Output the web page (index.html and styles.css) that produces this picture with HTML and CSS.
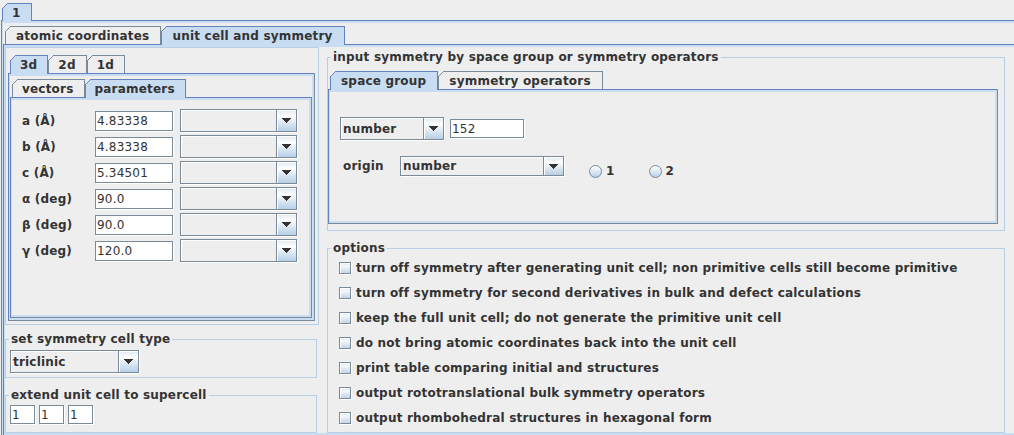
FILE: index.html
```html
<!DOCTYPE html>
<html>
<head>
<meta charset="utf-8">
<title>unit cell and symmetry</title>
<link rel="stylesheet" href="styles.css">
</head>
<body>
<div class="root">
  <div class="tabpane">
    <div class="tabrow r1"><div class="tab sel">1</div></div>
    <div class="tabcontent c1">
      <div class="tabpane">
        <div class="tabrow">
          <div class="tab">atomic coordinates</div>
          <div class="tab sel">unit cell and symmetry</div>
        </div>
        <div class="tabcontent c2">
          <div class="cols">
            <div class="leftcol">
              <div class="panel">
                <div class="tabpane">
                  <div class="tabrow compact">
                    <div class="tab sel">3d</div>
                    <div class="tab">2d</div>
                    <div class="tab">1d</div>
                  </div>
                  <div class="tabcontent c3">
                    <div class="tabpane">
                      <div class="tabrow compact">
                        <div class="tab">vectors</div>
                        <div class="tab sel">parameters</div>
                      </div>
                      <div class="tabcontent params">
                        <div class="prow"><span class="plabel">a (Å)</span><span class="tf ptf">4.83338</span><span class="combo pcombo"><span class="val"></span><span class="btn"><svg width="9" height="5" viewBox="0 0 9 5"><path d="M0 0h9v1H0zM1 1h7v1H1zM2 2h5v1H2zM3 3h3v1H3zM4 4h1v1H4z"/></svg></span></span></div>
                        <div class="prow"><span class="plabel">b (Å)</span><span class="tf ptf">4.83338</span><span class="combo pcombo"><span class="val"></span><span class="btn"><svg width="9" height="5" viewBox="0 0 9 5"><path d="M0 0h9v1H0zM1 1h7v1H1zM2 2h5v1H2zM3 3h3v1H3zM4 4h1v1H4z"/></svg></span></span></div>
                        <div class="prow"><span class="plabel">c (Å)</span><span class="tf ptf">5.34501</span><span class="combo pcombo"><span class="val"></span><span class="btn"><svg width="9" height="5" viewBox="0 0 9 5"><path d="M0 0h9v1H0zM1 1h7v1H1zM2 2h5v1H2zM3 3h3v1H3zM4 4h1v1H4z"/></svg></span></span></div>
                        <div class="prow"><span class="plabel">α (deg)</span><span class="tf ptf">90.0</span><span class="combo pcombo"><span class="val"></span><span class="btn"><svg width="9" height="5" viewBox="0 0 9 5"><path d="M0 0h9v1H0zM1 1h7v1H1zM2 2h5v1H2zM3 3h3v1H3zM4 4h1v1H4z"/></svg></span></span></div>
                        <div class="prow"><span class="plabel">β (deg)</span><span class="tf ptf">90.0</span><span class="combo pcombo"><span class="val"></span><span class="btn"><svg width="9" height="5" viewBox="0 0 9 5"><path d="M0 0h9v1H0zM1 1h7v1H1zM2 2h5v1H2zM3 3h3v1H3zM4 4h1v1H4z"/></svg></span></span></div>
                        <div class="prow"><span class="plabel">γ (deg)</span><span class="tf ptf">120.0</span><span class="combo pcombo"><span class="val"></span><span class="btn"><svg width="9" height="5" viewBox="0 0 9 5"><path d="M0 0h9v1H0zM1 1h7v1H1zM2 2h5v1H2zM3 3h3v1H3zM4 4h1v1H4z"/></svg></span></span></div>
                      </div>
                    </div>
                  </div>
                </div>
              </div>
              <fieldset class="group g-cell">
                <legend>set symmetry cell type</legend>
                <div class="gbody">
                  <span class="combo ccombo"><span class="val">triclinic</span><span class="btn"><svg width="9" height="5" viewBox="0 0 9 5"><path d="M0 0h9v1H0zM1 1h7v1H1zM2 2h5v1H2zM3 3h3v1H3zM4 4h1v1H4z"/></svg></span></span>
                </div>
              </fieldset>
              <fieldset class="group g-super">
                <legend>extend unit cell to supercell</legend>
                <div class="gbody">
                  <span class="tf stf">1</span><span class="tf stf">1</span><span class="tf stf">1</span>
                </div>
              </fieldset>
            </div>
            <div class="rightcol">
              <fieldset class="group g-input">
                <legend>input symmetry by space group or symmetry operators</legend>
                <div class="gbody">
                  <div class="tabpane">
                    <div class="tabrow">
                      <div class="tab sel">space group</div>
                      <div class="tab">symmetry operators</div>
                    </div>
                    <div class="tabcontent sg">
                      <div class="sgrow">
                        <span class="combo ncombo"><span class="val">number</span><span class="btn"><svg width="9" height="5" viewBox="0 0 9 5"><path d="M0 0h9v1H0zM1 1h7v1H1zM2 2h5v1H2zM3 3h3v1H3zM4 4h1v1H4z"/></svg></span></span>
                        <span class="tf ntf">152</span>
                      </div>
                      <div class="sgrow orow">
                        <span class="olabel">origin</span>
                        <span class="combo ocombo"><span class="val">number</span><span class="btn"><svg width="9" height="5" viewBox="0 0 9 5"><path d="M0 0h9v1H0zM1 1h7v1H1zM2 2h5v1H2zM3 3h3v1H3zM4 4h1v1H4z"/></svg></span></span>
                        <span class="radios">
                          <span class="radio"><span class="rb"></span>1</span>
                          <span class="radio"><span class="rb"></span>2</span>
                        </span>
                      </div>
                    </div>
                  </div>
                </div>
              </fieldset>
              <fieldset class="group g-opts">
                <legend>options</legend>
                <div class="gbody">
                  <div class="opt"><span class="cb"></span>turn off symmetry after generating unit cell; non primitive cells still become primitive</div>
                  <div class="opt"><span class="cb"></span>turn off symmetry for second derivatives in bulk and defect calculations</div>
                  <div class="opt"><span class="cb"></span>keep the full unit cell; do not generate the primitive unit cell</div>
                  <div class="opt"><span class="cb"></span>do not bring atomic coordinates back into the unit cell</div>
                  <div class="opt"><span class="cb"></span>print table comparing initial and structures</div>
                  <div class="opt"><span class="cb"></span>output rototranslational bulk symmetry operators</div>
                  <div class="opt"><span class="cb"></span>output rhombohedral structures in hexagonal form</div>
                </div>
              </fieldset>
            </div>
          </div>
        </div>
      </div>
    </div>
  </div>
</div>
</body>
</html>
```
FILE: styles.css
```css
html, body {
  margin: 0;
  padding: 0;
  overflow: hidden;
  background: #eeeeee;
}
body {
  width: 1014px;
  height: 435px;
  font-family: "DejaVu Sans", sans-serif;
  font-weight: bold;
  font-size: 12px;
  line-height: 14px;
  letter-spacing: 0.2px;
  color: #333333;
}
.root {
  width: 1040px;
  padding: 3px 0 0 1px;
}
.tabpane {
  display: flex;
  flex-direction: column;
}
.tabrow {
  display: flex;
  align-items: flex-start;
  height: 18px;
  padding-left: 2px;
  position: relative;
  z-index: 1;
}
.tabrow.r1 {
  height: 17px;
  padding-left: 1px;
}
.tab {
  box-sizing: border-box;
  position: relative;
  display: flex;
  align-items: center;
  height: 100%;
  padding: 0 11px 0 10px;
  border: 1px solid #7a8a99;
  border-bottom: 0;
  background: #eeeeee;
  white-space: nowrap;
}
.tab::before {
  content: "";
  position: absolute;
  left: -1px;
  top: -1px;
  width: 6px;
  height: 6px;
  background: linear-gradient(135deg, #eeeeee 3.9px, #7a8a99 3.9px, #7a8a99 4.6px, transparent 4.6px);
}
.tab.sel {
  height: calc(100% + 1px);
  padding-bottom: 1px;
  background: #c8ddf2;
  border-color: #6382bf;
}
.tab.sel::before {
  background: linear-gradient(135deg, #eeeeee 3.9px, #6382bf 3.9px, #6382bf 4.6px, transparent 4.6px);
}
.tabrow.r1 .tab {
  padding: 0 10px 0 9px;
}
.tabrow.compact .tab {
  padding: 0 10px 0 9px;
}
.tabcontent {
  box-sizing: border-box;
  border: 1px solid;
  border-color: #6382bf #7a8a99 #7a8a99 #6382bf;
  box-shadow: inset 1px 2px 0 #c8ddf2, inset -2px -2px 0 #c8ddf2;
  padding: 2px 2px 2px 1px;
}
.c1 {
  padding-top: 5px;
}
.c3 {
  padding-top: 5px;
}
.cols {
  display: flex;
  align-items: flex-start;
  gap: 8px;
}
.leftcol {
  width: 314px;
  display: flex;
  flex-direction: column;
}
.panel {
  border: 1px solid #b8cfe5;
  padding: 7px 3px 3px 2px;
}
.params {
  height: 221px;
  padding: 11px 2px 2px 11px;
  display: flex;
  flex-direction: column;
  gap: 3px;
}
.prow {
  display: flex;
  align-items: center;
  height: 23px;
}
.plabel {
  width: 73px;
}
.tf {
  box-sizing: border-box;
  display: flex;
  align-items: center;
  border: 1px solid #7a8a99;
  box-shadow: 1px 1px 0 #ffffff;
  background: #ffffff;
  padding-left: 1px;
  font-weight: normal;
  letter-spacing: 0.2px;
}
.ptf {
  width: 78px;
  height: 20px;
  margin-right: 7px;
}
.combo {
  box-sizing: border-box;
  display: flex;
  border: 1px solid #7a8a99;
  box-shadow: 1px 1px 0 #ffffff;
  background: #eeeeee;
}
.combo .val {
  flex: 1;
  display: flex;
  align-items: center;
  padding-left: 2px;
  box-shadow: inset 1px 1px 0 #ffffff;
}
.combo .btn {
  width: 19px;
  display: flex;
  align-items: center;
  justify-content: center;
  border-left: 1px solid #7a8a99;
  background: linear-gradient(#dde8f3 0%, #ffffff 30%, #dde8f3 60%, #b8cfe5 100%);
  box-shadow: inset 1px 1px 0 #ffffff;
}
.combo .btn svg {
  display: block;
  fill: #333333;
}
.pcombo {
  width: 117px;
  height: 23px;
}
.group {
  margin: 0;
  padding: 0;
  min-width: 0;
  border: 1px solid #b8cfe5;
}
.group legend {
  margin-left: 3px;
  padding: 0 2px;
  line-height: 14px;
}
.g-cell {
  width: 312px;
  box-sizing: border-box;
  margin-top: 7px;
}
.g-cell .gbody {
  padding: 4px 4px 4px 4px;
}
.ccombo {
  width: 129px;
  height: 23px;
}
.g-super {
  width: 312px;
  box-sizing: border-box;
  margin-top: 10px;
}
.g-super .gbody {
  display: flex;
  gap: 4px;
  padding: 3px 0 8px 4px;
}
.stf {
  width: 25px;
  height: 19px;
}
.rightcol {
  width: 678px;
}
.g-input {
  margin-top: 3px;
}
.g-input .gbody {
  padding: 7px 6px 6px 0;
}
.sg {
  height: 135px;
  padding: 27px 2px 2px 11px;
}
.sgrow {
  display: flex;
  align-items: center;
}
.ncombo {
  width: 104px;
  height: 23px;
  margin-right: 6px;
}
.ntf {
  width: 74px;
  height: 19px;
}
.orow {
  margin-top: 16px;
  align-items: flex-start;
}
.olabel {
  width: 57px;
  padding-left: 3px;
  line-height: 20px;
}
.ocombo {
  width: 164px;
  height: 20px;
  margin-right: 25px;
}
.radios {
  display: flex;
  gap: 34px;
  padding-top: 9px;
}
.radio {
  display: flex;
  align-items: center;
  gap: 4px;
  line-height: 13px;
}
.rb {
  box-sizing: border-box;
  width: 13px;
  height: 13px;
  border-radius: 50%;
  border: 1px solid #7a8a99;
  background: linear-gradient(#ffffff, #dde8f3 50%, #b8cfe5);
}
.g-opts {
  margin-top: 10px;
}
.g-opts .gbody {
  padding: 0 0 2px 11px;
}
.opt {
  display: flex;
  align-items: center;
  height: 25px;
  white-space: nowrap;
}
.cb {
  box-sizing: border-box;
  width: 12px;
  height: 12px;
  margin-right: 5px;
  border: 1px solid #7a8a99;
  box-shadow: 1px 1px 0 #ffffff, inset 1px 1px 0 #ffffff;
  background: linear-gradient(#dde8f3 0%, #f4f8fb 30%, #dde8f3 60%, #c4d6e9 100%);
}
```
